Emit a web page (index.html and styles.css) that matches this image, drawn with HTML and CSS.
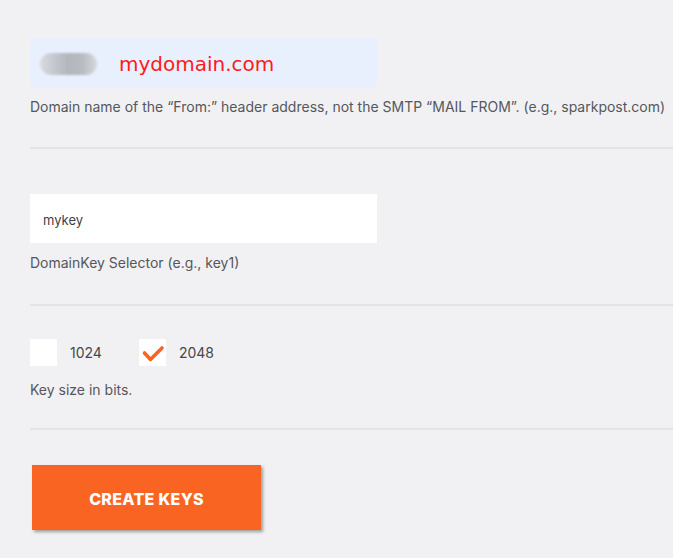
FILE: index.html
```html
<!DOCTYPE html>
<html>
<head>
<meta charset="utf-8">
<link rel="stylesheet" href="styles.css">
</head>
<body>
<div class="form">
  <section class="field">
    <div class="input input-autofill">
      <span class="blob"></span>
      <span class="domain">mydomain.com</span>
    </div>
    <p class="help">Domain name of the “From:” header address, not the SMTP “MAIL FROM”. (e.g., sparkpost.com)</p>
  </section>
  <section class="field field-second">
    <div class="input"><span class="value">mykey</span></div>
    <p class="help">DomainKey Selector (e.g., key1)</p>
  </section>
  <section class="field field-third">
    <div class="checks">
      <label class="check"><span class="box"></span><span class="check-label">1024</span></label>
      <label class="check"><span class="box"><svg width="27" height="27" viewBox="0 0 27 27"><path d="M5.5 14 L11.5 20.5 L23 9" fill="none" stroke="#fa6423" stroke-width="3.6" stroke-linecap="round" stroke-linejoin="round"/></svg></span><span class="check-label">2048</span></label>
    </div>
    <p class="help help-bits">Key size in bits.</p>
  </section>
  <div class="actions">
    <button class="btn">CREATE KEYS</button>
  </div>
</div>
</body>
</html>
```
FILE: styles.css
```css
html, body {
  margin: 0;
  padding: 0;
  background: #f1f1f3;
}
body {
  font-family: Inter, Roboto, "Liberation Sans", sans-serif;
  width: 673px;
  height: 558px;
  overflow: hidden;
}
.form {
  padding: 38px 0 0 30px;
}
.field {
  border-bottom: 2px solid #e4e4e7;
  padding-bottom: 30px;
}
.field-second {
  padding-top: 45px;
  padding-bottom: 31px;
}
.field-third {
  padding-top: 33px;
  padding-bottom: 28px;
}
.input {
  width: 347px;
  height: 49px;
  background: #ffffff;
  display: flex;
  align-items: center;
  box-sizing: border-box;
}
.input-autofill {
  background: #e8f0fe;
  padding-left: 10px;
}
.blob {
  width: 57px;
  height: 22px;
  border-radius: 11px;
  background: linear-gradient(90deg, #d9dce2 0%, #c4c7ce 25%, #b3b6bd 50%, #b8bcc1 75%, #d6d9de 100%);
  filter: blur(1px);
  margin-top: 2px;
}
.domain {
  margin-left: 22px;
  color: #ff1a1a;
  font-family: "DejaVu Sans", "Open Sans", sans-serif;
  font-size: 20px;
  margin-top: 3px;
}
.value {
  margin-left: 13px;
  font-size: 13px;
  color: #3f3f44;
  margin-top: 2px;
}
.help {
  margin: 10px 0 0 0;
  font-size: 14px;
  line-height: 20px;
  color: #55575c;
  white-space: nowrap;
}
.checks {
  display: flex;
}
.check {
  display: flex;
  align-items: center;
  margin-right: 37px;
}
.box {
  width: 27px;
  height: 27px;
  background: #ffffff;
  display: block;
}
.box svg {
  display: block;
}
.check-label {
  margin-left: 13px;
  font-size: 14px;
  color: #45474c;
}
.help-bits {
  margin-top: 14px;
}
.actions {
  padding-top: 35px;
}
.btn {
  margin-left: 2px;
  width: 229px;
  height: 65px;
  border: none;
  background: #fa6423;
  color: #ffffff;
  font-family: Inter, Roboto, sans-serif;
  font-weight: 800;
  font-size: 16px;
  letter-spacing: 0.3px;
  box-shadow: 2px 2px 3px rgba(0,0,0,0.35);
  padding: 3px 0 0 0;
}
```
